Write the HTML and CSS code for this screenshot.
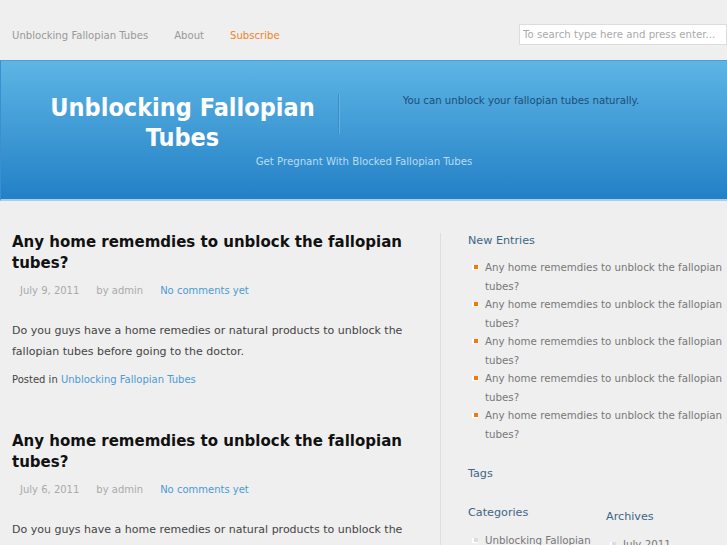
FILE: index.html
```html
<!DOCTYPE html>
<html>
<head>
<meta charset="utf-8">
<link rel="stylesheet" href="styles.css">
</head>
<body>
<div class="topbar">
  <nav class="nav">
    <a class="nav-link" href="#">Unblocking Fallopian Tubes</a>
    <a class="nav-link" href="#">About</a>
    <a class="nav-link sub" href="#">Subscribe</a>
  </nav>
  <input class="search" type="text" placeholder="To search type here and press enter...">
</div>
<header class="header">
  <div class="header-row">
    <h1 class="site-title">Unblocking Fallopian Tubes</h1>
    <div class="divider"></div>
    <p class="tagline">You can unblock your fallopian tubes naturally.</p>
  </div>
  <p class="subtitle">Get Pregnant With Blocked Fallopian Tubes</p>
</header>
<div class="main">
  <div class="content">
    <article class="post">
      <h2 class="post-title">Any home rememdies to unblock the fallopian tubes?</h2>
      <div class="meta"><span class="date">July 9, 2011</span><span class="author">by admin</span><a class="comments" href="#">No comments yet</a></div>
      <p class="excerpt">Do you guys have a home remedies or natural products to unblock the fallopian tubes before going to the doctor.</p>
      <p class="posted">Posted in <a href="#">Unblocking Fallopian Tubes</a></p>
    </article>
    <article class="post">
      <h2 class="post-title">Any home rememdies to unblock the fallopian tubes?</h2>
      <div class="meta"><span class="date">July 6, 2011</span><span class="author">by admin</span><a class="comments" href="#">No comments yet</a></div>
      <p class="excerpt">Do you guys have a home remedies or natural products to unblock the fallopian tubes before going to the doctor.</p>
      <p class="posted">Posted in <a href="#">Unblocking Fallopian Tubes</a></p>
    </article>
  </div>
  <aside class="sidebar">
    <h3 class="widget-title">New Entries</h3>
    <ul class="entries">
      <li>Any home rememdies to unblock the fallopian tubes?</li>
      <li>Any home rememdies to unblock the fallopian tubes?</li>
      <li>Any home rememdies to unblock the fallopian tubes?</li>
      <li>Any home rememdies to unblock the fallopian tubes?</li>
      <li>Any home rememdies to unblock the fallopian tubes?</li>
    </ul>
    <h3 class="widget-title tags">Tags</h3>
    <div class="cols">
      <div class="col">
        <h3 class="widget-title">Categories</h3>
        <ul class="small-list"><li>Unblocking Fallopian Tubes</li></ul>
      </div>
      <div class="col col2">
        <h3 class="widget-title">Archives</h3>
        <ul class="small-list"><li>July 2011</li></ul>
      </div>
    </div>
  </aside>
</div>
</body>
</html>
```
FILE: styles.css
```css
html, body { margin: 0; padding: 0; }
body {
  background: #efefef;
  font-family: "DejaVu Sans", Verdana, sans-serif;
  width: 727px;
  height: 545px;
  overflow: hidden;
}
a { text-decoration: none; }
.topbar {
  height: 60px;
  display: flex;
  align-items: center;
  justify-content: space-between;
  padding: 0 0 0 12px;
  box-sizing: border-box;
}
.nav { display: flex; gap: 26px; margin-top: 10px; }
.nav-link { font-size: 10.1px; color: #999; }
.nav-link.sub { color: #f0831f; }
.search {
  width: 208px;
  height: 21px;
  box-sizing: border-box;
  border: 1px solid #dcdcdc;
  background: #fff;
  font-family: "DejaVu Sans", sans-serif;
  font-size: 10.2px;
  padding: 0 3px;
  margin-top: 8px;
  outline: none;
}
.search::placeholder { color: #aaa; }
.header {
  height: 141px;
  box-sizing: border-box;
  background: linear-gradient(#5db5e4, #2380c6);
  border-top: 1px solid #4c9fd5;
  border-left: 1px solid #3c8ed0;
  border-bottom: 2px solid #a9cfe8;
}
.header-row { display: flex; align-items: flex-start; padding-top: 32px; }
.site-title {
  margin: 0;
  width: 337px;
  padding-left: 26px;
  box-sizing: border-box;
  text-align: center;
  color: #fff;
  font-family: "DejaVu Sans Condensed", "DejaVu Sans", sans-serif;
  font-weight: bold;
  font-size: 25px;
  line-height: 30px;
}
.divider {
  width: 1px;
  height: 40px;
  background: #3a8ccb;
  border-right: 1px solid #62b3e2;
  margin-top: 1px;
}
.tagline {
  margin: 1px 0 0 0;
  width: 362px;
  text-align: center;
  color: #1d4d7a;
  font-family: "DejaVu Sans Condensed", "DejaVu Sans", sans-serif;
  font-size: 11.3px;
}
.subtitle {
  margin: 2px 0 0 0;
  text-align: center;
  color: #b8dcf3;
  font-family: "DejaVu Sans Condensed", "DejaVu Sans", sans-serif;
  font-size: 11.3px;
}
.main { display: flex; }
.content {
  width: 440px;
  flex: 0 0 440px;
  padding: 31px 14px 0 12px;
  box-sizing: border-box;
}
.sidebar {
  flex: 1;
  min-width: 0;
  margin-top: 32px;
  border-left: 1px solid #dedede;
  padding: 1px 0 0 27px;
}
.post { margin-bottom: 46px; }
.post-title {
  margin: 0;
  font-size: 15px;
  line-height: 21px;
  color: #111;
  font-weight: bold;
}
.meta {
  margin: 11px 0 0 8px;
  font-size: 10px;
  color: #aaa;
  display: flex;
  gap: 17px;
}
.comments { color: #4a9bd4; }
.excerpt {
  margin: 24px 0 0 0;
  font-size: 11px;
  line-height: 21px;
  color: #444;
}
.posted {
  margin: 12px 0 0 0;
  font-size: 10px;
  color: #444;
}
.posted a { color: #4a9bd4; }
.widget-title {
  margin: 0;
  font-size: 11.2px;
  font-weight: normal;
  color: #3f6585;
}
.entries { list-style: none; margin: 11px 0 0 0; padding: 0; }
.entries li, .small-list li {
  position: relative;
  padding-left: 17px;
  font-size: 10.25px;
  line-height: 18.5px;
  color: #777;
}
.entries li::before {
  content: "";
  position: absolute;
  left: 4px;
  top: 7px;
  width: 4px;
  height: 4px;
  background: #f07a12;
  border-left: 2px solid #fff;
  border-bottom: 1px solid #fff;
}
.tags { margin-top: 24px; }
.cols { display: flex; margin-top: 26px; }
.col { flex: 0 0 138px; }
.col2 { flex: 1 1 auto; min-width: 0; margin-top: 4px; }
.small-list { list-style: none; margin: 12px 0 0 0; padding: 0; }
.small-list li::before {
  content: "";
  position: absolute;
  left: 4px;
  top: 7px;
  width: 4px;
  height: 4px;
  background: #ddd;
  border-left: 2px solid #fff;
  border-bottom: 1px solid #fff;
}
```
